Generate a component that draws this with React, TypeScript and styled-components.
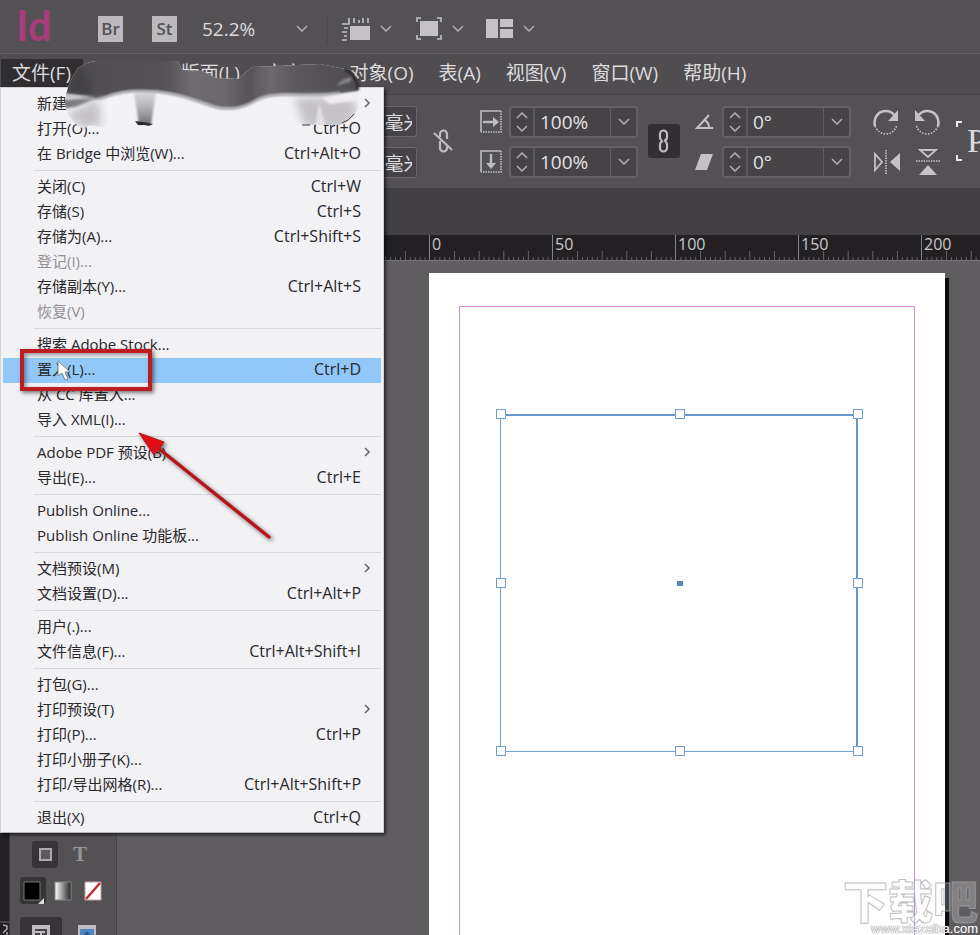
import React from "react";
import styled, { createGlobalStyle } from "styled-components";

const GlobalStyle = createGlobalStyle`
  *, *::before, *::after { box-sizing: border-box; }
  html, body { margin: 0; height: 100%; overflow: hidden; }
  body, button, input, select {
    font-family: "Open Sans", "Noto Sans CJK SC", sans-serif;
  }
  button { padding: 0; border: 0; background: none; color: inherit; font-size: inherit; }
  svg { display: block; flex: none; }
`;

const AppShell = styled.div`
  position: relative;
  display: flex;
  flex-direction: column;
  height: 100vh;
  overflow: hidden;
  background: #5f5d60;
  color: #dddbde;
`;

/* ---------- application bar ---------- */

const AppBar = styled.header`
  display: flex;
  align-items: center;
  flex: none;
  height: 54px;
  padding: 4px 0 0 16px;
  background: #535154;
  border-bottom: 1px solid #605e61;

  > * { flex: none; }
`;

const Logo = styled.div`
  width: 82px;
  margin-top: -8px;
  font-family: Lato, sans-serif;
  font-weight: 700;
  font-size: 42px;
  line-height: 48px;
  color: #a93c7b;
`;

const AppTile = styled.button`
  width: 25px;
  height: 26px;
  margin-right: 29px;
  background: #bbb9bc;
  color: #545255;
  font-weight: 600;
  font-size: 17px;
  line-height: 26px;
`;

const ZoomSelect = styled.select`
  width: 98px;
  margin-right: -4px;
  padding: 0;
  border: 0;
  appearance: none;
  background: transparent;
  color: #dddbde;
  font-size: 19px;
  line-height: 26px;
  margin-left: -4px;
`;

const Divider = styled.span`
  width: 1px;
  height: 30px;
  margin: 0 14px 0 19px;
  background: #4a484b;
`;

const IconButton = styled.button<{ $gap?: number }>`
  display: flex;
  align-items: center;
  gap: 10px;
  margin-right: ${(p) => p.$gap ?? 0}px;
`;

/* ---------- menu bar ---------- */

const MenuBar = styled.nav`
  display: flex;
  flex: none;
  height: 41px;
  padding: 5px 0 0 1px;
  background: #4f4d50;
  border-bottom: 1px solid #444245;
`;

const MenuTitle = styled.button<{ $open?: boolean }>`
  height: 28px;
  padding: 0 12px 0 11px;
  margin-right: 2px;
  background: ${(p) => (p.$open ? "#302e31" : "transparent")};
  font-size: 19px;
  line-height: 26px;
  white-space: nowrap;
`;

/* ---------- control bar ---------- */

const ControlBar = styled.section`
  display: flex;
  flex: none;
  height: 93px;
  padding-top: 11px;
  background: #535154;

  > * { flex: none; }
`;

const Stack = styled.div<{ $gap?: number; $right?: number }>`
  display: flex;
  flex-direction: column;
  gap: ${(p) => p.$gap ?? 10}px;
  margin-right: ${(p) => p.$right ?? 0}px;
`;

const Row = styled.div<{ $gap?: number }>`
  display: flex;
  align-items: center;
  gap: ${(p) => p.$gap ?? 7}px;
  height: 31px;
`;

const MeasureInput = styled.input`
  width: 95px;
  height: 31px;
  margin-left: 322px;
  padding: 0 4px 0 8px;
  border: 1px solid #69676a;
  border-radius: 3px;
  background: #454346;
  color: #dddbde;
  font-size: 19px;
`;

const IconCell = styled.span`
  display: flex;
  justify-content: center;
  width: 22px;
`;

const Field = styled.span`
  display: flex;
  width: 129px;
  height: 32px;
  border: 2px solid #626063;
  border-radius: 4px;
  background: #454346;
`;

const Stepper = styled.span`
  display: flex;
  flex-direction: column;
  align-items: center;
  justify-content: center;
  gap: 6px;
  width: 24px;
  border-right: 2px solid #5b595c;
`;

const FieldInput = styled.input`
  flex: 1;
  min-width: 0;
  padding: 0 0 0 5px;
  border: 0;
  background: transparent;
  color: #e4e2e5;
  font-size: 19px;
  line-height: 26px;
`;

const FieldDrop = styled.button`
  display: flex;
  align-items: center;
  justify-content: center;
  width: 26px;
  border-left: 1px solid #605e61;
`;

const LinkButton = styled.button<{ $on?: boolean }>`
  display: flex;
  align-items: center;
  justify-content: center;
  width: 32px;
  height: 34px;
  margin: 18px ${(p) => (p.$on ? 13 : 21)}px 0 10px;
  border-radius: 3px;
  background: ${(p) => (p.$on ? "#312f32" : "transparent")};
`;

const Reference = styled.div`
  display: flex;
  align-items: center;
  height: 70px;
  margin-left: 14px;
  font-family: "Liberation Serif", serif;
  font-size: 34px;
`;

/* ---------- document area ---------- */

const TabStrip = styled.div`
  flex: none;
  height: 47px;
  background: #424043;
`;

const Ruler = styled.div`
  display: flex;
  flex: none;
  height: 26px;
  padding-left: 60px;
  overflow: hidden;
  background: #222023;
  border-bottom: 1px solid #7a787b;
`;

const RulerSegment = styled.div`
  display: flex;
  flex-direction: column;
  flex: none;
  width: 123px;
  border-left: 1px solid #858386;
  color: #c9c7ca;
  font-size: 16px;
  line-height: 17px;
`;

const RulerLabel = styled.span`
  height: 16px;
  padding: 1px 0 0 2px;
  font-weight: 500;
`;

const Workspace = styled.main`
  display: flex;
  flex: 1;
  min-height: 0;
  overflow: hidden;
`;

const SideRuler = styled.div`
  display: flex;
  align-items: flex-end;
  width: 10px;
  background: #222023;
  border-right: 1px solid #3c3a3d;
`;

const ToolPanel = styled.aside`
  display: flex;
  flex-direction: column;
  justify-content: flex-end;
  width: 107px;
  padding-left: 10px;
  background: #535154;
  border-right: 1px solid #464447;
`;

const ToolRow = styled.div<{ $height: number; $gap: number; $indent?: number }>`
  display: flex;
  flex: none;
  gap: ${(p) => p.$gap}px;
  height: ${(p) => p.$height}px;
  padding-left: ${(p) => p.$indent ?? 0}px;
  overflow: hidden;
`;

const Tool = styled.button<{ $on?: boolean; $wide?: boolean }>`
  display: flex;
  align-items: center;
  justify-content: center;
  flex: none;
  width: ${(p) => (p.$wide ? 42 : 26)}px;
  height: ${(p) => (p.$wide ? 34 : 27)}px;
  border-radius: 3px;
  background: ${(p) => (p.$on ? "#363437" : "transparent")};
  color: #969497;
  font-family: "Liberation Serif", serif;
  font-weight: 700;
  font-size: 21px;
`;

const Pasteboard = styled.div`
  flex: 1;
  padding: 12px 0 0 312px;
`;

const Page = styled.div`
  position: relative;
  width: 516px;
  height: 730px;
  background: #fefefe;
  box-shadow: 4px 5px 0 #0c0b0c;
`;

const MarginGuide = styled.div`
  position: absolute;
  inset: 33px 30px 30px 30px;
  border: 1px solid #bd93d6;
  border-top-color: #e08fe0;
`;

const Frame = styled.div`
  position: absolute;
  left: 71px;
  top: 141px;
  width: 358px;
  height: 338px;
  border: 1px solid #6fa3d8;
  border-top: 2px solid #6897cd;
  border-right: 2px solid #6897cd;
`;

const HandleLayer = styled.div`
  position: absolute;
  inset: -2px -2px 0 0;
`;

const Handle = styled.span<{ $x: number; $y: number }>`
  position: absolute;
  left: ${(p) => p.$x}%;
  top: ${(p) => p.$y}%;
  width: 10px;
  height: 10px;
  margin: -5px;
  border: 1px solid #6c9fd6;
  background: #fff;
`;

const CenterPoint = styled.span`
  position: absolute;
  left: 50%;
  top: 50%;
  width: 6px;
  height: 5px;
  margin: -2px -3px;
  background: #5587bf;
`;

/* ---------- file menu ---------- */

const Menu = styled.div`
  position: absolute;
  left: 0;
  top: 87px;
  width: 384px;
  padding: 4px 2px 1px;
  border: 1px solid #d4d2d5;
  border-bottom-color: #b5b3b6;
  background: #f2f1f4;
  box-shadow: 2px 2px 3px rgba(0, 0, 0, 0.6);
  color: #29282b;
`;

const MenuItem = styled.button<{ $active?: boolean }>`
  display: flex;
  align-items: center;
  justify-content: space-between;
  width: 100%;
  height: 25px;
  padding: 0 20px 3px 34px;
  background: ${(p) => (p.$active ? "#91c8f8" : "transparent")};
  font-size: 15px;
  line-height: 22px;
  white-space: nowrap;

  &:disabled { color: #929094; }
  svg { margin-right: -10px; }
`;

const Shortcut = styled.span`
  font-size: 16px;
`;

const MenuSeparator = styled.hr`
  height: 2px;
  margin: 3px 0 3px 31px;
  border: 0;
  border-top: 1px solid #d9d7da;
`;

/* ---------- annotations ---------- */

const Overlay = styled.svg<{ $x: number; $y: number }>`
  position: absolute;
  left: ${(p) => p.$x}px;
  top: ${(p) => p.$y}px;
  pointer-events: none;
`;

const Highlight = styled.div`
  position: absolute;
  left: 20px;
  top: 349px;
  width: 132px;
  height: 42px;
  border: 4px solid #bd1c20;
  box-shadow: 2px 2px 4px rgba(0, 0, 0, 0.5), inset 2px 2px 4px rgba(0, 0, 0, 0.4);
`;

const Watermark = styled.div`
  position: absolute;
  right: 2px;
  bottom: 0;
  display: flex;
  flex-direction: column;
  align-items: flex-end;
  color: rgba(255, 255, 255, 0.22);
  font-family: "Noto Sans CJK SC", sans-serif;
  font-weight: 900;
  -webkit-text-stroke: 1px rgba(165, 163, 166, 0.7);
`;

const WatermarkName = styled.span`
  font-size: 45px;
  line-height: 46px;
`;

const WatermarkUrl = styled.span`
  font-family: "Liberation Sans", sans-serif;
  font-weight: 400;
  font-size: 13px;
  line-height: 12px;
  color: #fff;
  -webkit-text-stroke: 0;
  text-shadow: 0 0 1px #777, 0 0 1px #777;
`;

/* ---------- icons ---------- */

const Chevron = ({ dir = "down" }: { dir?: "down" | "up" }) => (
  <svg width="12" height="7" viewBox="0 0 12 7" fill="none" stroke="#b2b0b3" strokeWidth="1.5">
    <path d={dir === "down" ? "M1 1l5 5 5-5" : "M1 6l5-5 5 5"} />
  </svg>
);

const RulerIcon = () => (
  <svg width="28" height="24" viewBox="0 0 28 24" fill="#c4c2c5">
    <path d="M8 9h20v14H8z" />
    <path d="M0 7h7V1M12 1v5M17 3v3M21 1v5M26 1v5M2 11h4M0 15h5M2 19h3M0 23h5" fill="none" stroke="#c4c2c5" strokeWidth="1.6" />
  </svg>
);

const ScreenIcon = () => (
  <svg width="26" height="23" viewBox="0 0 26 23">
    <path d="M4 4h18v15H4z" fill="#c4c2c5" />
    <path d="M1 5V1h4M21 1h4v4M25 18v4h-4M5 22H1v-4" fill="none" stroke="#c4c2c5" strokeWidth="1.6" />
  </svg>
);

const ArrangeIcon = () => (
  <svg width="27" height="19" viewBox="0 0 27 19" fill="#c4c2c5">
    <path d="M0 0h12v19H0zM14 0h13v8H14zM14 10h13v9H14z" />
  </svg>
);

const LinkIcon = ({ broken = false }: { broken?: boolean }) => (
  <svg width="24" height="26" viewBox="0 0 24 26" fill="none" stroke="#bebcbf" strokeWidth="2.2">
    {broken ? (
      <path d="M9 9V6a3.500 3.500 0 0 1 7 0v5M9 13v7a3.500 3.500 0 0 0 7 0v-2M3 5l18 17" />
    ) : (
      <path d="M8 9V6a3.500 3.500 0 0 1 7 0v3q0 3-3 4M15 17v3a3.500 3.500 0 0 1-7 0v-3q0-3 3-4M8 9q0 3 2 3M15 17q0-3-2-3" />
    )}
  </svg>
);

const ScaleIcon = ({ vertical = false }: { vertical?: boolean }) => (
  <svg width="22" height="23" viewBox="0 0 22 23" fill="none" stroke="#bebcbf">
    <path d="M1 22V1h20" strokeWidth="1.6" />
    <path d="M21 1v21H1" strokeWidth="1.6" strokeDasharray="1.500 1" />
    {vertical ? (
      <><path d="M11 4v11" strokeWidth="2.4" /><path d="M6 13h10l-5 6z" fill="#bebcbf" stroke="none" /></>
    ) : (
      <><path d="M3 12h11" strokeWidth="2.4" /><path d="M13 7v10l6-5z" fill="#bebcbf" stroke="none" /></>
    )}
  </svg>
);

const AngleIcon = () => (
  <svg width="19" height="16" viewBox="0 0 19 16" fill="none" stroke="#c4c2c5" strokeWidth="2">
    <path d="M14 1L2 14h16M9 6c3 1 5 4 5 8" />
  </svg>
);

const ShearIcon = () => (
  <svg width="18" height="16" viewBox="0 0 18 16" fill="#c4c2c5"><path d="M6 0h12l-6 16H0z" /></svg>
);

const RotateIcon = ({ ccw = false }: { ccw?: boolean }) => (
  <svg width="26" height="28" viewBox="0 0 26 28">
    <g transform={ccw ? "translate(26 0) scale(-1 1)" : undefined} fill="none" stroke="#c4c2c5">
      <path d="M2 18C0 10 5 3 13 3c4 0 7 2 9 5" strokeWidth="2.6" />
      <path d="M25 2v11H15z" fill="#c4c2c5" stroke="none" />
      <path d="M2 18c2 5 6 8 11 8s9-3 11-9" strokeWidth="1.6" strokeDasharray="1.500 1.500" />
    </g>
  </svg>
);

const FlipIcon = ({ vertical = false }: { vertical?: boolean }) => (
  <svg width="28" height="28" viewBox="0 0 28 28">
    <g transform={vertical ? "rotate(90 14 14)" : undefined} stroke="#c4c2c5" fill="none">
      <path d="M2 6v16l7-8z" strokeWidth="1.8" />
      <path d="M27 5v18l-10-9z" fill="#c4c2c5" stroke="none" />
      <path d="M13 2v24" strokeWidth="1.6" strokeDasharray="1.500 1" />
    </g>
  </svg>
);

const CornerIcon = () => (
  <svg width="11" height="40" viewBox="0 0 11 40" fill="none" stroke="#e8e6e9" strokeWidth="2">
    <path d="M1 6V1h5M1 34v5h5" />
  </svg>
);

const Submenu = () => (
  <svg width="7" height="10" viewBox="0 0 7 10" fill="none" stroke="#646266" strokeWidth="1.5">
    <path d="M1 1l4 4-4 4" />
  </svg>
);

/* ---------- data ---------- */

type Entry = { label: string; keys?: string; sub?: boolean; off?: boolean; active?: boolean };

const menuGroups: Entry[][] = [
  [{ label: "新建(N)", sub: true }, { label: "打开(O)...", keys: "Ctrl+O" }, { label: "在 Bridge 中浏览(W)...", keys: "Ctrl+Alt+O" }],
  [
    { label: "关闭(C)", keys: "Ctrl+W" },
    { label: "存储(S)", keys: "Ctrl+S" },
    { label: "存储为(A)...", keys: "Ctrl+Shift+S" },
    { label: "登记(I)...", off: true },
    { label: "存储副本(Y)...", keys: "Ctrl+Alt+S" },
    { label: "恢复(V)", off: true },
  ],
  [{ label: "搜索 Adobe Stock..." }, { label: "置入(L)...", keys: "Ctrl+D", active: true }, { label: "从 CC 库置入..." }, { label: "导入 XML(I)..." }],
  [{ label: "Adobe PDF 预设(B)", sub: true }, { label: "导出(E)...", keys: "Ctrl+E" }],
  [{ label: "Publish Online..." }, { label: "Publish Online 功能板..." }],
  [{ label: "文档预设(M)", sub: true }, { label: "文档设置(D)...", keys: "Ctrl+Alt+P" }],
  [{ label: "用户(.)..." }, { label: "文件信息(F)...", keys: "Ctrl+Alt+Shift+I" }],
  [
    { label: "打包(G)..." },
    { label: "打印预设(T)", sub: true },
    { label: "打印(P)...", keys: "Ctrl+P" },
    { label: "打印小册子(K)..." },
    { label: "打印/导出网格(R)...", keys: "Ctrl+Alt+Shift+P" },
  ],
  [{ label: "退出(X)", keys: "Ctrl+Q" }],
];

const titles = ["文件(F)", "编辑(E)", "版面(L)", "文字(T)", "对象(O)", "表(A)", "视图(V)", "窗口(W)", "帮助(H)"];
const rulerLabels = ["", "", "", "0", "50", "100", "150", "200"];
const handles = [[0, 0], [50, 0], [100, 0], [0, 50], [100, 50], [0, 100], [50, 100], [100, 100]];

const Ticks = () => (
  <svg width="123" height="9" viewBox="0 0 50 9" preserveAspectRatio="none" stroke="#858386">
    {Array.from({ length: 24 }, (_, i) => (i + 1) * 2).map((u) => (
      <path key={u} d={`M${u} ${u % 10 === 0 ? 0 : 6}V9`} strokeWidth="0.4" />
    ))}
  </svg>
);

const ValueField = ({ label, value }: { label: string; value: string }) => (
  <Field>
    <Stepper><Chevron dir="up" /><Chevron /></Stepper>
    <FieldInput aria-label={label} defaultValue={value} />
    <FieldDrop aria-label={`${label} 选项`}><Chevron /></FieldDrop>
  </Field>
);

const Smudge = () => (
  <Overlay $x={56} $y={56} width="310" height="76" viewBox="56 56 310 76">
    <defs>
      <filter id="soft" filterUnits="userSpaceOnUse" x="40" y="40" width="340" height="110" colorInterpolationFilters="sRGB"><feGaussianBlur stdDeviation="1.2" /></filter>
      <filter id="haze" filterUnits="userSpaceOnUse" x="40" y="40" width="340" height="110" colorInterpolationFilters="sRGB"><feGaussianBlur stdDeviation="4" /></filter>
      <linearGradient id="streak" x1="0" y1="0" x2="0" y2="1">
        <stop offset="0" stopColor="#b4b2b5" stopOpacity="0.4" />
        <stop offset="1" stopColor="#6d6b6e" />
      </linearGradient>
      <linearGradient id="band" gradientUnits="userSpaceOnUse" x1="60" y1="0" x2="360" y2="0">
        <stop offset="0" stopColor="#4f4d50" />
        <stop offset="0.35" stopColor="#545255" />
        <stop offset="0.44" stopColor="#6e6c6f" />
        <stop offset="0.55" stopColor="#6a686b" />
        <stop offset="0.63" stopColor="#565457" />
        <stop offset="0.7" stopColor="#6c6a6d" />
        <stop offset="0.78" stopColor="#5b595c" />
        <stop offset="0.9" stopColor="#525053" />
        <stop offset="1" stopColor="#4f4d50" />
      </linearGradient>
      <clipPath id="blot">
        <path d="M78 68Q86 62 96 61L178 61 182 70 202 71 216 78 238 79 252 67 320 64 350 70Q357 76 358 90V108Q354 120 340 125L300 125 290 127H155L144 125 98 127Q88 123 84 129 68 122 65 104 66 84 78 68Z" />
      </clipPath>
    </defs>
    <path d="M96 58H178V72H96ZM310 58H340V72H310Z" fill="#4f4d50" />
    <g clipPath="url(#blot)">
      <path d="M56 56h310v76H56z" fill="#f3f2f5" />
      <path d="M40 20H380V90L340 94Q315 96 304 95C285 94 266 94 255 101 245 107 232 111 215 107 190 99 175 91 140 91 113 91 107 98 98 99L40 91Z" fill="url(#band)" filter="url(#soft)" />
      <path d="M98 99C107 98 113 91 140 91 175 91 190 99 215 107 232 111 245 107 255 101 266 94 285 94 304 95Q330 95 340 93" fill="none" stroke="#b5b3b6" strokeWidth="2.500" filter="url(#soft)" />
      <path d="M78 64L66 92 90 96 88 76Z" fill="#353336" opacity="0.5" filter="url(#haze)" />
      <path d="M62 93L96 97 64 99Z" fill="#c9c7ca" filter="url(#soft)" />
      <path d="M62 100L98 98 76 107 62 109Z" fill="#7b797c" filter="url(#soft)" />
      <path d="M66 114L98 99 102 124 84 130Z" fill="#c5c3c6" filter="url(#haze)" />
      <path d="M134 92H156L151 125H139Z" fill="url(#streak)" filter="url(#soft)" />
      <path d="M135 121Q144 122 153 124L148 126 138 125Z" fill="#2c2a2d" />
      <path d="M294 98L350 96 358 110 346 129 305 127Z" fill="#c4c2c5" filter="url(#haze)" />
      <path d="M322 98L362 90 358 100 330 104Z" fill="#f0eef1" filter="url(#soft)" />
      <path d="M319 102L326 127H315Z" fill="#e2e0e3" filter="url(#soft)" />
      <path d="M336 86Q342 78 352 77L350 82Z" fill="#858386" filter="url(#soft)" />
    </g>
    <path d="M345 70Q357 74 358 90" stroke="#242225" strokeWidth="2.500" fill="none" filter="url(#soft)" />
    <path d="M354 114Q349 121 342 123M302 125h8" stroke="#3c3a3d" strokeWidth="1" fill="none" />
  </Overlay>
);

export default function App() {
  return (
    <AppShell>
      <GlobalStyle />
      <AppBar>
        <Logo>Id</Logo>
        <AppTile>Br</AppTile>
        <AppTile>St</AppTile>
        <ZoomSelect aria-label="缩放级别" defaultValue="52.2%"><option>52.2%</option></ZoomSelect>
        <IconButton aria-label="缩放选项"><Chevron /></IconButton>
        <Divider />
        <IconButton aria-label="视图选项" $gap={24}><RulerIcon /><Chevron /></IconButton>
        <IconButton aria-label="屏幕模式" $gap={22}><ScreenIcon /><Chevron /></IconButton>
        <IconButton aria-label="排列文档"><ArrangeIcon /><Chevron /></IconButton>
      </AppBar>

      <MenuBar>
        {titles.map((t, i) => <MenuTitle key={t} $open={i === 0}>{t}</MenuTitle>)}
      </MenuBar>

      <ControlBar>
        <Stack>
          <MeasureInput aria-label="宽度" defaultValue="145.5 毫米" />
          <MeasureInput aria-label="高度" defaultValue="137.5 毫米" />
        </Stack>
        <LinkButton aria-label="取消约束"><LinkIcon broken /></LinkButton>
        <Stack $gap={9}>
          <Row><IconCell><ScaleIcon /></IconCell><ValueField label="X 缩放" value="100%" /></Row>
          <Row><IconCell><ScaleIcon vertical /></IconCell><ValueField label="Y 缩放" value="100%" /></Row>
        </Stack>
        <LinkButton $on aria-label="约束缩放比例"><LinkIcon /></LinkButton>
        <Stack $gap={9} $right={22}>
          <Row><IconCell><AngleIcon /></IconCell><ValueField label="旋转角度" value="0°" /></Row>
          <Row><IconCell><ShearIcon /></IconCell><ValueField label="切变角度" value="0°" /></Row>
        </Stack>
        <Stack $gap={9}>
          <Row $gap={15}>
            <IconButton aria-label="顺时针旋转"><RotateIcon /></IconButton>
            <IconButton aria-label="逆时针旋转"><RotateIcon ccw /></IconButton>
          </Row>
          <Row $gap={13}>
            <IconButton aria-label="水平翻转"><FlipIcon /></IconButton>
            <IconButton aria-label="垂直翻转"><FlipIcon vertical /></IconButton>
          </Row>
        </Stack>
        <Reference><CornerIcon />P</Reference>
      </ControlBar>

      <TabStrip />
      <Ruler>
        {rulerLabels.map((n, i) => (
          <RulerSegment key={i}><RulerLabel>{n}</RulerLabel><Ticks /></RulerSegment>
        ))}
      </Ruler>

      <Workspace>
        <SideRuler>
          <svg width="9" height="16" viewBox="0 0 9 16" fill="none" stroke="#aaa8ab">
            <path d="M0 3h9" stroke="#6a686b" /><path d="M3 6l4 1v3l-4 4M7 13v3" strokeWidth="1.5" />
          </svg>
        </SideRuler>
        <ToolPanel>
          <ToolRow $height={36} $gap={9} $indent={12}>
            <Tool $on aria-label="格式针对容器">
              <svg width="13" height="13" viewBox="0 0 13 13" fill="#5c5a5d" stroke="#aaa8ab" strokeWidth="2"><path d="M1 1h11v11H1z" /></svg>
            </Tool>
            <Tool aria-label="格式针对文本">T</Tool>
          </ToolRow>
          <ToolRow $height={40} $gap={4}>
            <Tool $on aria-label="应用颜色">
              <svg width="22" height="26" viewBox="0 0 22 26">
                <path d="M2 4h16v18H2z" fill="#000" stroke="#777578" /><path d="M22 20v6h-6z" fill="#dcdadd" />
              </svg>
            </Tool>
            <Tool aria-label="应用渐变">
              <svg width="18" height="20" viewBox="0 0 18 20">
                <defs><linearGradient id="grad"><stop stopColor="#fff" /><stop offset="1" stopColor="#222" /></linearGradient></defs>
                <path d="M1 1h16v18H1z" fill="url(#grad)" stroke="#888689" />
              </svg>
            </Tool>
            <Tool aria-label="应用无">
              <svg width="18" height="20" viewBox="0 0 18 20">
                <path d="M1 1h16v18H1z" fill="#fff" stroke="#c9a0a2" /><path d="M2 18L16 2" stroke="#c32a2e" strokeWidth="2.4" />
              </svg>
            </Tool>
          </ToolRow>
          <ToolRow $height={18} $gap={4}>
            <Tool $on $wide aria-label="正常">
              <svg width="18" height="18" viewBox="0 0 18 18"><path d="M0 0h18v18H0z" fill="#bebcbf" /><path d="M3 5h11v4h-4M3 9h4v6" fill="none" stroke="#444245" strokeWidth="2" /></svg>
            </Tool>
            <Tool $wide aria-label="预览">
              <svg width="18" height="18" viewBox="0 0 18 18"><path d="M0 0h18v18H0z" fill="#bebcbf" /><path d="M2 4h14v14H2z" fill="#4d86c4" /><path d="M5 10l4-4 4 4z" fill="#2a5f9c" /></svg>
            </Tool>
          </ToolRow>
        </ToolPanel>
        <Pasteboard>
          <Page>
            <MarginGuide />
            <Frame>
              <HandleLayer>
                {handles.map(([x, y]) => <Handle key={`${x}-${y}`} $x={x} $y={y} />)}
                <CenterPoint />
              </HandleLayer>
            </Frame>
          </Page>
        </Pasteboard>
      </Workspace>

      <Menu>
        {menuGroups.map((group, g) => (
          <React.Fragment key={g}>
            {g > 0 && <MenuSeparator />}
            {group.map((e) => (
              <MenuItem key={e.label} disabled={e.off} $active={e.active}>
                <span>{e.label}</span>
                {e.keys && <Shortcut>{e.keys}</Shortcut>}
                {e.sub && <Submenu />}
              </MenuItem>
            ))}
          </React.Fragment>
        ))}
      </Menu>

      <Smudge />
      <Overlay $x={57} $y={360} width="14" height="22" viewBox="0 0 14 22">
        <path d="M1 1v15l4-3 3 7 3-1-3-7h5z" fill="#fff" stroke="#77858f" />
      </Overlay>
      <Highlight />
      <Overlay $x={130} $y={424} width="150" height="124" viewBox="130 424 150 124">
        <defs>
          <filter id="shade"><feDropShadow dx="2" dy="2" stdDeviation="2" floodOpacity="0.55" /></filter>
        </defs>
        <g filter="url(#shade)">
          <path d="M158 448L269 537" stroke="#b5191d" strokeWidth="3.500" strokeLinecap="round" />
          <path d="M139 433L164 442 160 448 154 455Z" fill="#e01013" stroke="#b5191d" />
        </g>
      </Overlay>
      <Watermark>
        <WatermarkName>下载吧</WatermarkName>
        <WatermarkUrl>www.xiazaiba.com</WatermarkUrl>
      </Watermark>
    </AppShell>
  );
}
